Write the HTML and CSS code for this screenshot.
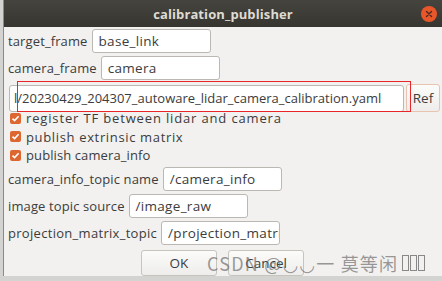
FILE: index.html
```html
<!DOCTYPE html>
<html>
<head>
<meta charset="utf-8">
<link rel="stylesheet" href="styles.css">
</head>
<body>
<div class="desk">
  <div class="window">
    <div class="titlebar">
      <span class="title">calibration_publisher</span>
      <span class="close">
        <svg width="16" height="16" viewBox="0 0 16 16"><circle cx="8" cy="8" r="8" fill="#e9562a"/><path d="M5.5 5.5 L10.5 10.5 M10.5 5.5 L5.5 10.5" stroke="#4a2a1e" stroke-width="1.4" stroke-linecap="round"/></svg>
      </span>
    </div>
    <div class="content">
      <div class="row r1"><span class="label">target_frame</span><div class="field w118">base_link</div></div>
      <div class="row r2"><span class="label">camera_frame</span><div class="field w118">camera</div></div>
      <div class="row r3">
        <div class="field path"><span class="cut">l/20230429_204307_autoware_lidar_camera_calibration.yaml</span></div>
        <div class="btn ref">Ref</div>
      </div>
      <div class="check c1"><span class="box"><svg width="11" height="11" viewBox="0 0 11 11"><path d="M2.5 5.6 L4.6 7.6 L8.6 3.3" fill="none" stroke="#fff" stroke-width="1.6"/></svg></span><span class="t1">register TF between lidar and camera</span></div>
      <div class="check"><span class="box"><svg width="11" height="11" viewBox="0 0 11 11"><path d="M2.5 5.6 L4.6 7.6 L8.6 3.3" fill="none" stroke="#fff" stroke-width="1.6"/></svg></span><span class="t2">publish extrinsic matrix</span></div>
      <div class="check"><span class="box"><svg width="11" height="11" viewBox="0 0 11 11"><path d="M2.5 5.6 L4.6 7.6 L8.6 3.3" fill="none" stroke="#fff" stroke-width="1.6"/></svg></span><span class="t3">publish camera_info</span></div>
      <div class="row r4"><span class="label">camera_info_topic name</span><div class="field w118">/camera_info</div></div>
      <div class="row r5"><span class="label">image topic source</span><div class="field w118">/image_raw</div></div>
      <div class="row r6"><span class="label wide">projection_matrix_topic</span><div class="field w118">/projection_matrix</div></div>
      <div class="buttons">
        <div class="btn ok">OK</div>
        <div class="btn cancel">Cancel</div>
      </div>
    </div>
    <div class="redbox"></div>
    <div class="watermark">CSDN @◡◡一 莫等闲<span class="tofu"></span><span class="tofu"></span><span class="tofu"></span></div>
  </div>
</div>
</body>
</html>
```
FILE: styles.css
```css
html, body {
  margin: 0;
  padding: 0;
}
body {
  width: 442px;
  height: 281px;
  overflow: hidden;
  background: #d3d3d1;
  font-family: "Open Sans", "DejaVu Sans", sans-serif;
  font-size: 13px;
  color: #3c3c3c;
}
.desk {
  padding-left: 3px;
}
.window {
  position: relative;
  width: 439px;
  height: 276px;
  background: #f2f1f0;
  border-left: 1px solid #8c8a86;
  box-sizing: border-box;
  overflow: hidden;
}
.titlebar {
  height: 27px;
  background: linear-gradient(#45443f, #36352f);
  display: flex;
  align-items: center;
  justify-content: center;
  position: relative;
}
.title {
  color: #dfdbd2;
  font-weight: bold;
  font-size: 13px;
  letter-spacing: 0.1px;
}
.close {
  position: absolute;
  right: 5px;
  top: 6px;
  width: 16px;
  height: 16px;
}
.content {
  padding: 2px 0 0 4px;
}
.row {
  display: flex;
  align-items: center;
  gap: 4px;
}
.label {
  white-space: nowrap;
  letter-spacing: 0.12px;
}
.label.wide {
  letter-spacing: 0.3px;
}
.field {
  background: #ffffff;
  border: 1px solid #bbb8b3;
  border-radius: 3px;
  height: 24px;
  box-sizing: border-box;
  padding: 0 6px;
  display: flex;
  align-items: center;
  white-space: nowrap;
  overflow: hidden;
  color: #3c3c3c;
  font-size: 13.5px;
  letter-spacing: 0.3px;
}
.w118 {
  width: 119px;
}
.r2 { margin-top: 3px; }
.r3 {
  margin-top: 4px;
  gap: 2px;
  margin-left: 1px;
}
.path {
  width: 395px;
  height: 27px;
  padding: 0 0 0 4px;
  font-size: 13px;
  letter-spacing: 0;
}
.cut {
  margin-left: 0;
}
.btn {
  border: 1px solid #c7c3bd;
  border-radius: 3px;
  background: linear-gradient(#fbfbfa, #eeedec);
  box-sizing: border-box;
  display: flex;
  align-items: center;
  justify-content: center;
  color: #3c3c3c;
  font-size: 13.5px;
}
.ref {
  width: 34px;
  height: 28px;
  border-color: #e8c3b0;
}
.check {
  display: flex;
  align-items: center;
  height: 18.5px;
  padding-left: 2px;
}
.c1 { margin-top: -3px; }
.t1 { letter-spacing: 0.85px; }
.t2 { letter-spacing: 0.65px; }
.t3 { letter-spacing: 0.1px; }
.box {
  width: 11px;
  height: 11px;
  border-radius: 2px;
  background: #dd6730;
  margin-right: 5px;
  display: flex;
}
.r4 { margin-top: 2px; }
.r5 { margin-top: 3px; }
.r6 { margin-top: 3px; }
.buttons {
  display: flex;
  gap: 11px;
  margin-top: 5px;
  margin-left: 133px;
}
.ok {
  width: 76px;
  height: 26px;
}
.cancel {
  width: 76px;
  height: 26px;
}
.redbox {
  position: absolute;
  left: 13px;
  top: 81px;
  width: 394px;
  height: 31px;
  border: 1px solid #e8262a;
  box-sizing: border-box;
  pointer-events: none;
}
.watermark {
  position: absolute;
  left: 203px;
  top: 250px;
  font-family: "Noto Sans CJK SC", "DejaVu Sans", sans-serif;
  font-size: 18px;
  letter-spacing: 1.2px;
  color: rgba(110, 110, 110, 0.7);
  white-space: nowrap;
  display: flex;
  align-items: center;
}
.tofu {
  display: inline-block;
  width: 5px;
  height: 14px;
  border: 1px solid rgba(110, 110, 110, 0.8);
  margin-left: 1px;
}
.tofu:first-of-type {
  margin-left: 4px;
}
```
